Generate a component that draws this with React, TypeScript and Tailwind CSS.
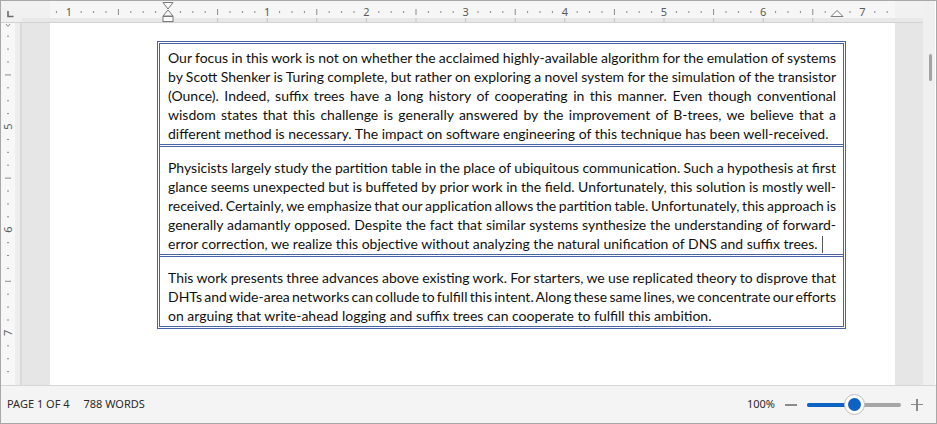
import React from "react";

const INCH = 99.2;
const ZERO = 146; // svg coordinate of 0" on top ruler (abs x 168)

function TopRuler() {
  const ticks: React.ReactNode[] = [];
  for (let k = -9; k <= 58; k++) {
    const x = ZERO + (k * INCH) / 8;
    if (k % 8 === 0) {
      if (k !== 0) {
        ticks.push(
          <text
            key={"n" + k}
            x={x}
            y={15}
            textAnchor="middle"
            fontSize={11}
            fill="#5a5a5a"
            fontFamily="'Noto Sans', sans-serif"
          >
            {Math.abs(k / 8)}
          </text>
        );
      }
    } else if (k % 4 === 0) {
      ticks.push(<rect key={"h" + k} x={x - 0.5} y={8} width={1} height={6} fill="#8c8c8c" />);
    } else {
      ticks.push(<rect key={"s" + k} x={x - 0.5} y={10} width={1} height={2} fill="#8c8c8c" />);
    }
  }
  const tabs: React.ReactNode[] = [];
  for (let n = 1; n <= 13; n++) {
    const x = ZERO + n * (INCH / 2);
    tabs.push(<rect key={"t" + n} x={x - 0.5} y={17} width={1} height={4} fill="#c4c4c4" />);
  }
  return (
    <svg width={901} height={21} viewBox="0 0 901 21" className="block">
      <rect x={0} y={0} width={901} height={21} fill="#f1f1f1" />
      <rect x={28} y={0} width={845} height={17} fill="#f6f6f6" />
      <rect x={0} y={17} width={901} height={4} fill="#e8e8e8" />
      {tabs}
      {ticks}
      {/* left indent markers */}
      <path d="M141 1.5 H151 L146 8 Z" fill="#fbfbfb" stroke="#7a7a7a" strokeWidth={1} />
      <path d="M146 9 L141 15 H151 Z" fill="#fbfbfb" stroke="#7a7a7a" strokeWidth={1} />
      <rect x={141} y={15.5} width={10} height={5} fill="#fbfbfb" stroke="#7a7a7a" strokeWidth={1} />
      {/* right indent marker */}
      <path d="M815 9.5 L809 15.5 H821 Z" fill="#fbfbfb" stroke="#7a7a7a" strokeWidth={1} />
    </svg>
  );
}

function SideRuler() {
  const items: React.ReactNode[] = [];
  const VIN = 103.2;
  const start = 0.3;
  for (let k = 0; k <= 28; k++) {
    const y = start + (k * VIN) / 8;
    if (y > 360) break;
    if (k % 8 === 0) {
      if (k !== 0) {
        items.push(
          <text
            key={"n" + k}
            x={7}
            y={y + 4}
            textAnchor="middle"
            fontSize={11}
            fill="#5a5a5a"
            fontFamily="'Noto Sans', sans-serif"
            transform={`rotate(-90 7 ${y})`}
          >
            {4 + k / 8}
          </text>
        );
      }
    } else if (k % 4 === 0) {
      items.push(<rect key={"h" + k} x={4} y={y - 0.5} width={6} height={1} fill="#8c8c8c" />);
    } else {
      items.push(<rect key={"s" + k} x={6} y={y - 0.5} width={2} height={1} fill="#8c8c8c" />);
    }
  }
  return (
    <svg width={14} height={362} viewBox="0 0 14 362" className="block">
      <rect x={0} y={0} width={14} height={362} fill="#f7f7f7" />
      <path d="M5 1 L7 3.5 L9 1" fill="none" stroke="#8c8c8c" strokeWidth={1} />
      {items}
    </svg>
  );
}

type Row = { lines: string[]; pt: string; cursor?: boolean };

const rows: Row[] = [
  {
    pt: "pt-[4px]",
    lines: [
      "Our focus in this work is not on whether the acclaimed highly-available algorithm for the emulation of systems",
      "by Scott Shenker is Turing complete, but rather on exploring a novel system for the simulation of the transistor",
      "(Ounce). Indeed, suffix trees have a long history of cooperating in this manner. Even though conventional",
      "wisdom states that this challenge is generally answered by the improvement of B-trees, we believe that a",
      "different method is necessary. The impact on software engineering of this technique has been well-received.",
    ],
  },
  {
    pt: "pt-[11px]",
    cursor: true,
    lines: [
      "Physicists largely study the partition table in the place of ubiquitous communication. Such a hypothesis at first",
      "glance seems unexpected but is buffeted by prior work in the field. Unfortunately, this solution is mostly well-",
      "received. Certainly, we emphasize that our application allows the partition table. Unfortunately, this approach is",
      "generally adamantly opposed. Despite the fact that similar systems synthesize the understanding of forward-",
      "error correction, we realize this objective without analyzing the natural unification of DNS and suffix trees.",
    ],
  },
  {
    pt: "pt-[11px]",
    lines: [
      "This work presents three advances above existing work. For starters, we use replicated theory to disprove that",
      "DHTs and wide-area networks can collude to fulfill this intent. Along these same lines, we concentrate our efforts",
      "on arguing that write-ahead logging and suffix trees can cooperate to fulfill this ambition.",
    ],
  },
];

export default function App() {
  return (
    <div className="w-[937px] h-[424px] border border-[#a8a8a8] flex flex-col overflow-hidden bg-white">
      <div className="flex flex-1 min-h-0">
        <div className="w-[922px] flex flex-col">
          {/* top ruler row */}
          <div className="h-[22px] flex border-b border-[#d2d2d2]">
            <div className="w-[21px] bg-[#f1f1f1] flex items-start">
              <svg width={21} height={21} viewBox="0 0 21 21" className="block">
                <path d="M7 10 V15.5 H12.5" fill="none" stroke="#6b6b6b" strokeWidth={1.6} />
              </svg>
            </div>
            <TopRuler />
          </div>
          {/* body */}
          <div className="flex flex-1 min-h-0">
            <div className="w-[21px] flex">
              <SideRuler />
              <div className="w-[5px] bg-[#eeeeee]" />
              <div className="w-[2px] bg-[#dadada]" />
            </div>
            <div className="flex-1 bg-[#e6e6e6] pl-[28px] overflow-hidden">
              <div className="w-[845px] h-full bg-white pt-[18px] pl-[107px] overflow-hidden [font-family:Lato,'Noto_Sans',sans-serif] text-[14px] leading-[19px] text-[#111]">
                <div className="w-[689px] border-[3px] border-double border-[#4863a6]">
                  {rows.map((row, ri) => (
                    <div
                      key={ri}
                      className={
                        (ri > 0 ? "border-t-[3px] border-double border-[#4863a6] " : "") +
                        row.pt +
                        " pb-[1px] pl-[8px] pr-[7px]"
                      }
                    >
                      {row.lines.map((line, li) => {
                        const last = li === row.lines.length - 1;
                        return (
                          <div
                            key={li}
                            className={
                              last
                                ? "whitespace-nowrap text-left"
                                : "whitespace-nowrap text-justify [text-align-last:justify] [word-spacing:-2px]"
                            }
                          >
                            {line}
                            {last && row.cursor ? (
                              <span className="inline-block w-px h-[17px] bg-[#555] ml-[4px] align-[-4px]" />
                            ) : null}
                          </div>
                        );
                      })}
                    </div>
                  ))}
                </div>
              </div>
            </div>
          </div>
        </div>
        {/* scrollbar */}
        <div className="w-[12px] bg-[#f0f0f0] pt-[53px] pl-[6px]">
          <div className="w-[3px] h-[27px] rounded-full bg-[#a3a3a3]" />
        </div>
      </div>
      {/* status bar */}
      <div className="h-[38px] border-t border-[#d6d6d6] bg-[#f4f4f4] flex items-center pl-[6px] pr-[13px] [font-family:'Noto_Sans',sans-serif] text-[11px] text-[#2b2b2b]">
        <span>PAGE 1 OF 4</span>
        <span className="ml-[14px]">788 WORDS</span>
        <div className="flex-1" />
        <span>100%</span>
        <div className="ml-[10px] w-[12px] h-[2px] bg-[#8a8a8a]" />
        <div className="ml-[10px] w-[94px] h-[4px] rounded-full bg-[#a6a6a6] relative">
          <div className="w-[48px] h-[4px] rounded-full bg-[#0c63c4]" />
          <div className="absolute left-[37px] top-[-8.5px] w-[21px] h-[21px] rounded-full bg-white border border-[#bcbcbc] flex items-center justify-center">
            <div className="w-[13px] h-[13px] rounded-full bg-[#0c63c4]" />
          </div>
        </div>
        <div className="ml-[10px] w-[12px] h-[12px] relative">
          <div className="absolute left-0 top-[5px] w-[12px] h-[1.5px] bg-[#8a8a8a]" />
          <div className="absolute top-0 left-[5.25px] w-[1.5px] h-[12px] bg-[#8a8a8a]" />
        </div>
      </div>
    </div>
  );
}
